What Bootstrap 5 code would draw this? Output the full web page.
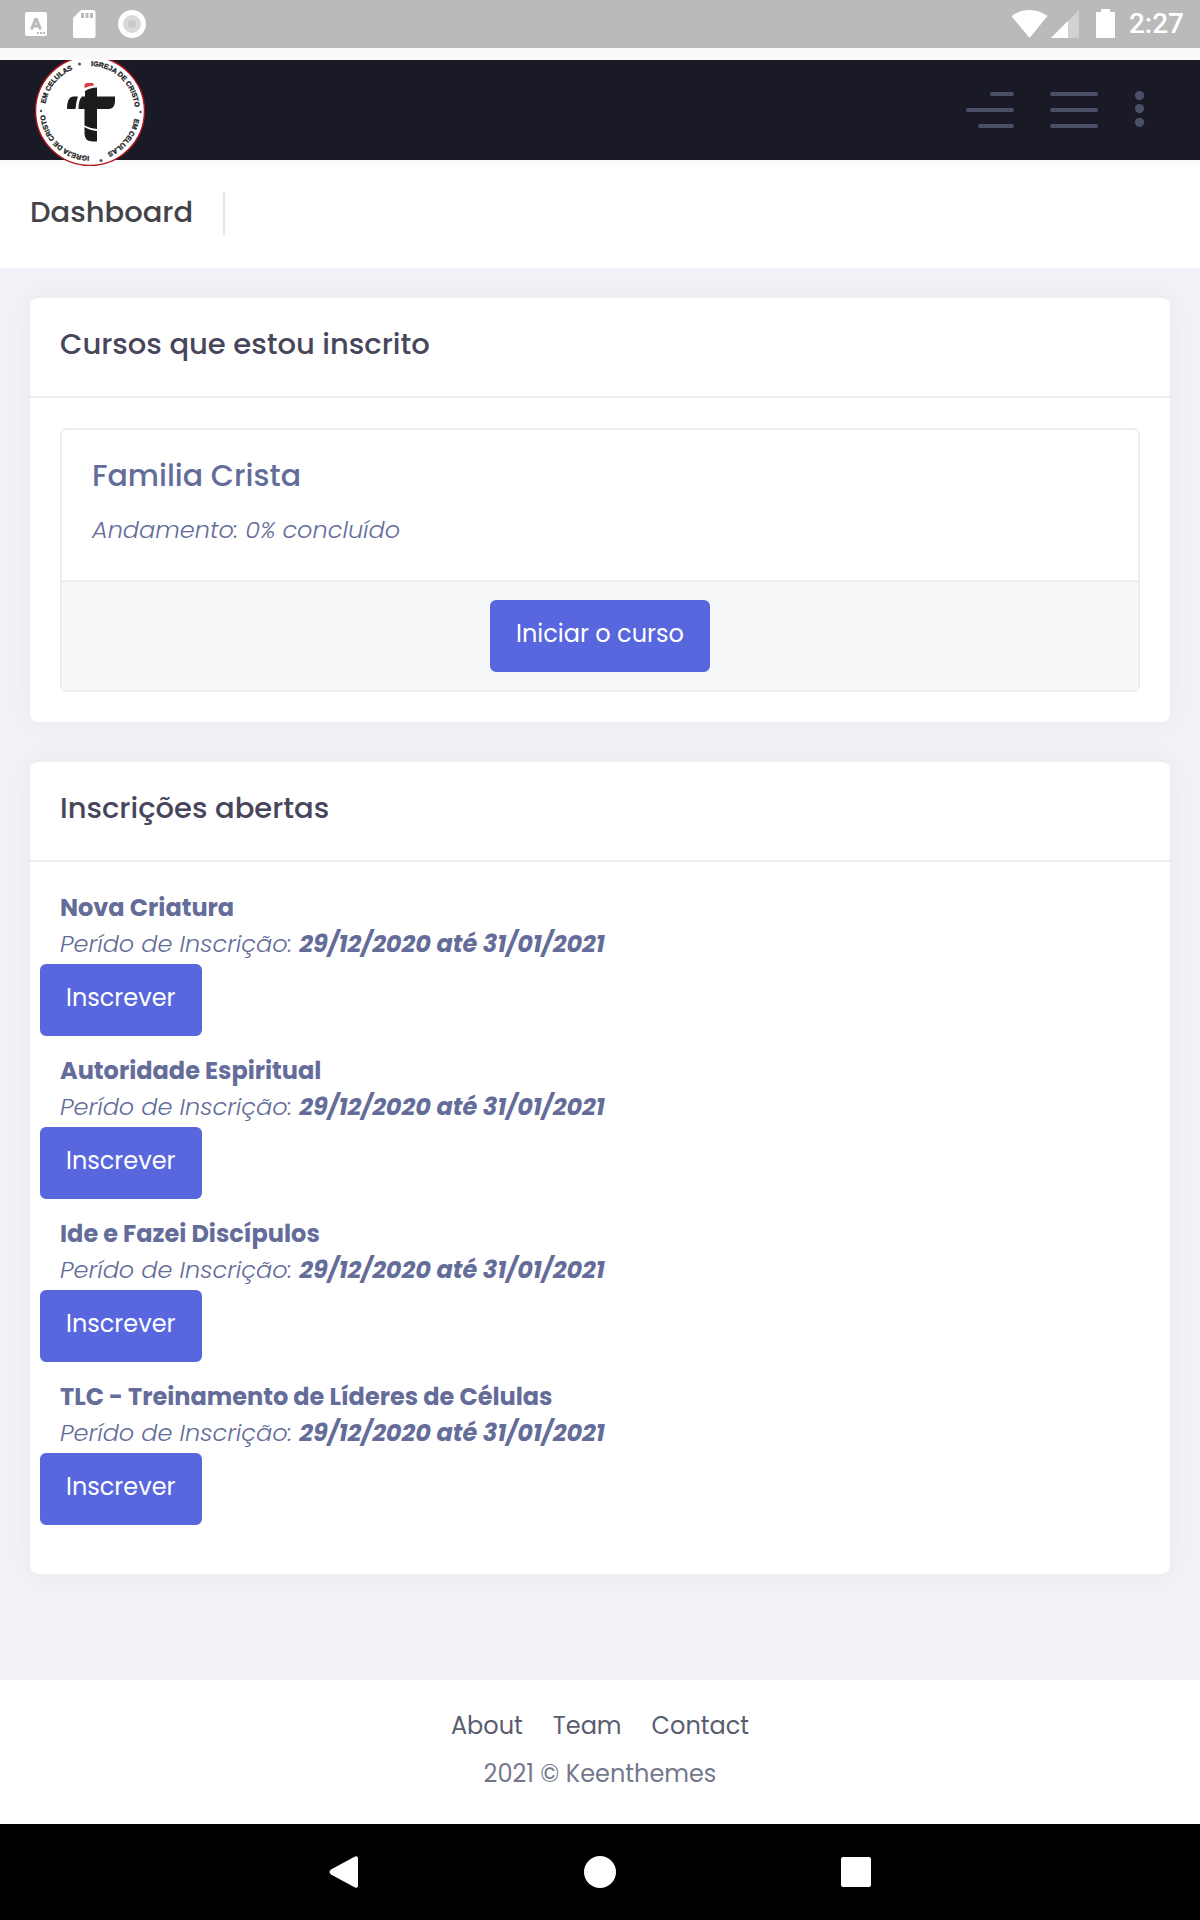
<!DOCTYPE html>
<html lang="pt-BR">
<head>
<meta charset="utf-8">
<meta name="viewport" content="width=device-width, initial-scale=1">
<title>Dashboard</title>
<link rel="stylesheet" href="https://cdn.jsdelivr.net/npm/bootstrap@5.3.0/dist/css/bootstrap.min.css">
<style>
  body { font-family: Poppins, Inter, "Noto Sans", sans-serif; font-size: 24px; line-height: 36px; color: #646c9a; background: #f0f2f7; }
  .status-bar { height: 48px; background: #bababa; padding: 0 16px 0 25px; color: #fff; }
  .status-time { font-family: Roboto, sans-serif; font-size: 28px; font-weight: 500; line-height: 48px; }
  .status-icons { margin-right: 14px; }
  .status-strip { height: 12px; background: #fafafa; }
  .brand-bar { height: 100px; background: #1a1a27; padding: 0 54px 0 35px; }
  .brand-link { height: 106px; line-height: 0; }
  .tool-btn { line-height: 0; }
  .page-top { height: 108px; padding: 32px 30px; box-shadow: inset 0 8px 8px -8px rgba(82, 63, 105, .08); }
  .page-title { font-size: 29px; font-weight: 500; line-height: 40px; color: #434349; padding-right: 30px; border-right: 2px solid #e7e8ef; height: 44px; }
  .content-area { padding: 30px 30px 106px; }
  .portlet { border: 0; border-radius: 8px; box-shadow: 0 0 26px rgba(82, 63, 105, .05); color: inherit; }
  .portlet + .portlet { margin-top: 40px; }
  .portlet > .card-header { background: #fff; border-bottom: 2px solid #ebedf2; padding: 26px 30px 32px; border-radius: 8px 8px 0 0; }
  .portlet-title { font-size: 29px; line-height: 40px; font-weight: 500; color: #48465b; }
  .portlet > .card-body { padding: 30px; }
  .portlet > .enroll-list { padding: 28px 30px 32px; }
  .course { border: 2px solid #ebedf2; border-radius: 6px; color: inherit; }
  .course > .card-body { padding: 26px 30px 32px; }
  .course > .card-footer { background: #f7f8fa; border-top: 2px solid #ebedf2; padding: 18px; }
  .course-name { font-size: 30px; line-height: 40px; font-weight: 500; margin-bottom: 16px; }
  .thin { font-weight: 300; font-style: italic; }
  .thin strong { font-weight: 700; }
  .btn-brand { --bs-btn-color: #fff; --bs-btn-bg: #5867dd; --bs-btn-border-color: #5867dd; --bs-btn-hover-color: #fff; --bs-btn-hover-bg: #4456d8; --bs-btn-border-radius: 6px; --bs-btn-font-size: 24px; --bs-btn-line-height: 36px; --bs-btn-padding-x: 24px; border-width: 2px; padding-top: 14px; padding-bottom: 18px; vertical-align: top; }
  .enroll { margin: 2px 0 17px -20px; }
  .page-foot { height: 144px; padding-top: 28px; }
  .foot-links { gap: 30px; margin-bottom: 12px; }
  .page-foot a { color: #595d6e; text-decoration: none; }
  .foot-copy { color: #74788d; }
  .system-nav { height: 96px; background: #000; padding: 0 328px; }
</style>
</head>
<body>
<div class="status-bar d-flex align-items-center justify-content-between">
  <svg width="122" height="30" viewBox="25 9 122 30" fill="#fff" aria-hidden="true">
    <rect x="25" y="12" width="22" height="24" rx="2"/>
    <path d="M31.500 29.500 35.500 19.500h1L40.500 29.500M33 26h6" fill="none" stroke="#bababa" stroke-width="3"/>
    <path d="M37 32h2v2h-2zM40 32h2v2h-2zM43 32h2v2h-2z" fill="#bababa"/>
    <path d="M81 10h12a2.500 2.500 0 0 1 2.500 2.500v23A2.500 2.500 0 0 1 93 38H75.500a2.500 2.500 0 0 1-2.500-2.500V18z"/>
    <path d="M81 13h3v5h-3zM85.500 13h3v5h-3zM90 13h3v5h-3z" fill="#bababa"/>
    <circle cx="132" cy="24" r="14"/><circle cx="132" cy="24" r="9" fill="#d9d9d9"/><circle cx="132" cy="24" r="4" fill="#cbcbcb"/>
  </svg>
  <div class="d-flex align-items-center">
    <svg class="status-icons" width="104" height="30" viewBox="1011 9 104 30" fill="#fff" aria-hidden="true">
      <path d="M1011.500 16C1022 8 1037 8 1047.500 16L1029.500 38z"/>
      <path d="M1079 10v28h-28z" fill="#d1d1d1"/><path d="M1068 21v17h-17z"/>
      <path d="M1101 9h9v3h5v26h-19V12h5z"/>
    </svg>
    <span class="status-time">2:27</span>
  </div>
</div>
<div class="status-strip"></div>
<header class="brand-bar d-flex justify-content-between align-items-start">
  <a class="brand-link d-block" href="#" aria-label="Igreja de Cristo em Células">
    <svg width="110" height="106" viewBox="35 60 110 106">
      <defs><path id="ring" d="M90 66a45 45 0 0 1 0 90a45 45 0 0 1 0-90"/></defs>
      <circle cx="90" cy="111" r="54.500" fill="#fff" stroke="#b5161c" stroke-width="1.500"/>
      <g font-family="Liberation Sans, sans-serif" font-size="7" font-weight="700" fill="#222" stroke="#222" stroke-width=".3">
        <text><textPath href="#ring" startOffset="1">IGREJA DE CRISTO</textPath></text>
        <text><textPath href="#ring" startOffset="78">EM CELULAS</textPath></text>
        <text><textPath href="#ring" startOffset="142">IGREJA DE CRISTO</textPath></text>
        <text><textPath href="#ring" startOffset="219">EM CELULAS</textPath></text>
      </g>
      <g fill="#555"><circle cx="79.500" cy="64" r="1.500"/><circle cx="140.500" cy="112" r="1.200"/><circle cx="101" cy="160.500" r="1.500"/><circle cx="41" cy="111" r="1.200"/></g>
      <path d="M84.500 88v-2.500q0-2.500 3-2.500h5.500l1 2.500q-5 0-9.500 2.500z" fill="#e0383e"/>
      <g fill="#1c1c1c"><path d="M67 109q0-12 6-12.500h5q-2 5-2.500 12.500z"/><path d="M78.500 109q0-9 3.500-12.500h3V91q5-3.500 12-3.500v9h18v4q0 8-6 8.500H97v20q-7-.500-12.500-3.500V109z"/><path d="M84.500 127q5.500 3.500 12.500 4v10.500h-4q-8.500 0-8.500-8z"/></g>
    </svg>
  </a>
  <div class="d-flex align-items-center h-100">
    <button type="button" class="btn p-0 border-0 tool-btn" aria-label="Menu lateral"><svg width="48" height="36" fill="#4b5069"><rect x="24" width="24" height="4" rx="2"/><rect y="16" width="48" height="4" rx="2"/><rect x="12" y="32" width="36" height="4" rx="2"/></svg></button>
    <button type="button" class="btn p-0 border-0 tool-btn ms-4" aria-label="Menu"><svg width="60" height="36" fill="#4b5069"><rect x="12" width="48" height="4" rx="2"/><rect x="12" y="16" width="48" height="4" rx="2"/><rect x="12" y="32" width="48" height="4" rx="2"/></svg></button>
    <button type="button" class="btn p-0 border-0 tool-btn ms-4" aria-label="Mais"><svg width="24" height="38" fill="#4b5069"><circle cx="17.500" cy="4.600" r="4.600"/><circle cx="17.500" cy="17.600" r="4.600"/><circle cx="17.500" cy="31.300" r="4.600"/></svg></button>
  </div>
</header>
<div class="page-top bg-white d-flex"><h1 class="page-title mb-0">Dashboard</h1></div>
<main class="content-area">
  <section class="card portlet">
    <div class="card-header"><h2 class="portlet-title mb-0">Cursos que estou inscrito</h2></div>
    <div class="card-body">
      <article class="card course">
        <div class="card-body"><h3 class="course-name">Familia Crista</h3><p class="thin mb-0">Andamento: 0% concluído</p></div>
        <div class="card-footer text-center"><button type="button" class="btn btn-brand">Iniciar o curso</button></div>
      </article>
    </div>
  </section>
  <section class="card portlet">
    <div class="card-header"><h2 class="portlet-title mb-0">Inscrições abertas</h2></div>
    <div class="card-body enroll-list">
      <div><strong class="d-block">Nova Criatura</strong><div class="thin">Perído de Inscrição: <strong>29/12/2020 até 31/01/2021</strong></div><button type="button" class="btn btn-brand enroll">Inscrever</button></div>
      <div><strong class="d-block">Autoridade Espiritual</strong><div class="thin">Perído de Inscrição: <strong>29/12/2020 até 31/01/2021</strong></div><button type="button" class="btn btn-brand enroll">Inscrever</button></div>
      <div><strong class="d-block">Ide e Fazei Discípulos</strong><div class="thin">Perído de Inscrição: <strong>29/12/2020 até 31/01/2021</strong></div><button type="button" class="btn btn-brand enroll">Inscrever</button></div>
      <div><strong class="d-block">TLC - Treinamento de Líderes de Células</strong><div class="thin">Perído de Inscrição: <strong>29/12/2020 até 31/01/2021</strong></div><button type="button" class="btn btn-brand enroll">Inscrever</button></div>
    </div>
  </section>
</main>
<footer class="page-foot bg-white text-center">
  <nav class="foot-links d-flex justify-content-center"><a href="#">About</a><a href="#">Team</a><a href="#">Contact</a></nav>
  <div class="foot-copy">2021 © Keenthemes</div>
</footer>
<div class="system-nav d-flex align-items-center justify-content-between">
  <button type="button" class="btn p-0 border-0 tool-btn" aria-label="Voltar"><svg width="32" height="32" fill="#fff"><path d="M3 13.500 27 .500q3-1 3 2v27q0 3-3 2L3 18.500q-3-2.500 0-5z"/></svg></button>
  <button type="button" class="btn p-0 border-0 tool-btn" aria-label="Início"><svg width="32" height="32" fill="#fff"><circle cx="16" cy="16" r="16"/></svg></button>
  <button type="button" class="btn p-0 border-0 tool-btn" aria-label="Recentes"><svg width="32" height="32" fill="#fff"><rect x="1" y="1" width="30" height="30" rx="2"/></svg></button>
</div>
<script src="https://cdn.jsdelivr.net/npm/bootstrap@5.3.0/dist/js/bootstrap.bundle.min.js"></script>
</body>
</html>
